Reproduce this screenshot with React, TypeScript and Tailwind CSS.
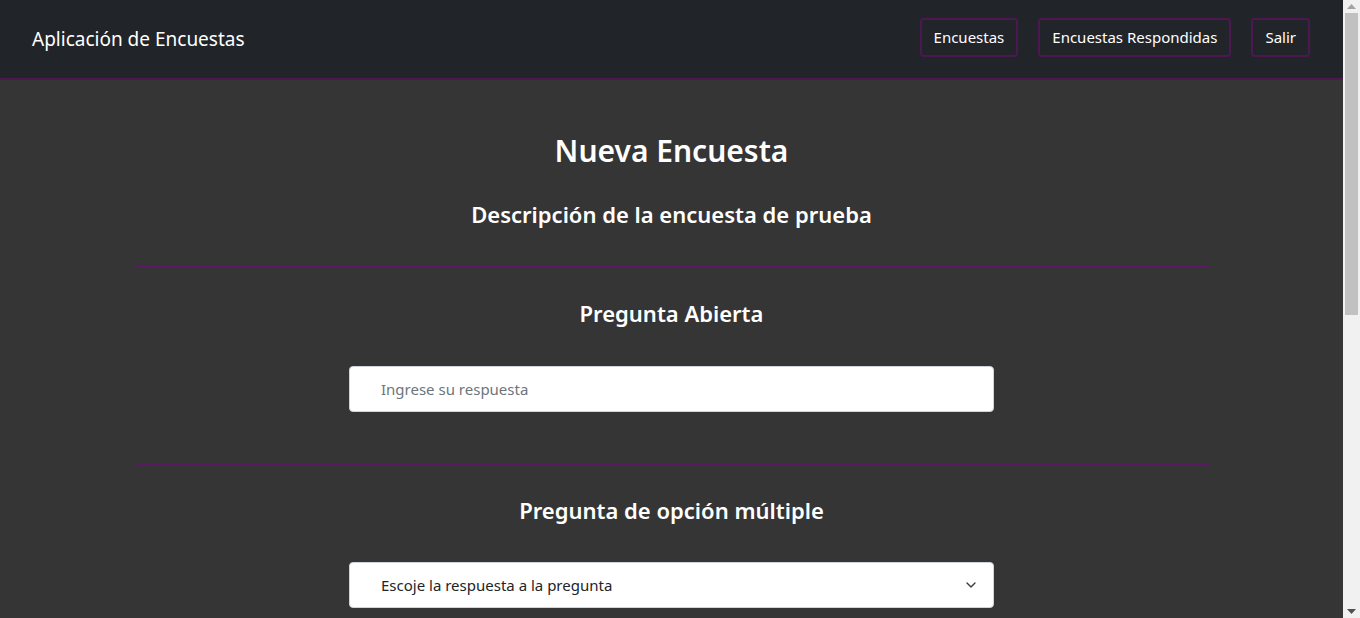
import { ChevronDown } from "lucide-react";

const font = { fontFamily: '"Noto Sans", "Open Sans", sans-serif' };

function NavButton({ label }: { label: string }) {
  return (
    <button className="h-[39px] px-[12px] rounded-[4px] border-2 border-[#4d1752] text-white text-[15px] leading-none">
      {label}
    </button>
  );
}

function Scrollbar() {
  return (
    <aside className="w-[17px] h-screen shrink-0 bg-[#f1f1f1] flex flex-col items-center">
      <svg className="mt-[4px] w-[9px] h-[5px]" viewBox="0 0 9 5">
        <path d="M4.5 0 L9 5 H0 Z" fill="#a3a3a3" />
      </svg>
      <div className="mt-[4px] w-[13px] h-[302px] bg-[#c1c1c1]" />
      <div className="flex-1" />
      <svg className="mb-[4px] w-[9px] h-[5px]" viewBox="0 0 9 5">
        <path d="M0 0 H9 L4.5 5 Z" fill="#505050" />
      </svg>
    </aside>
  );
}

export default function App() {
  return (
    <div className="flex h-screen overflow-hidden" style={font}>
      <div className="flex-1 min-w-0 h-screen overflow-hidden bg-[#353535] text-white">
        <nav className="h-[80px] bg-[#212529] border-b-2 border-[#4d1752] flex items-center justify-between pl-[32px] pr-[33px]">
          <span className="text-[19px] text-white">Aplicación de Encuestas</span>
          <div className="flex items-center gap-[20px] mb-[3px]">
            <NavButton label="Encuestas" />
            <NavButton label="Encuestas Respondidas" />
            <NavButton label="Salir" />
          </div>
        </nav>

        <main className="mx-auto w-[1074px] pt-[52px] pb-24">
          <h1 className="text-center text-[30px] font-semibold leading-[38px]">Nueva Encuesta</h1>
          <h2 className="mt-[30px] text-center text-[22px] font-semibold leading-[29px]">
            Descripción de la encuesta de prueba
          </h2>

          <hr className="mt-[37px] border-0 h-[2px] bg-[#5c1a66]" />

          {/* Pregunta abierta */}
          <h3 className="mt-[31px] text-center text-[22px] font-semibold leading-[29px]">Pregunta Abierta</h3>
          <div className="mt-[38px] flex justify-center">
            <input
              type="text"
              placeholder="Ingrese su respuesta"
              className="w-[645px] h-[46px] rounded-[4px] bg-white border border-[#ced4da] pl-[31px] text-[15px] text-[#212529] placeholder:text-[#6c757d] outline-none"
            />
          </div>

          <hr className="mt-[51px] border-0 h-[2px] bg-[#5c1a66]" />

          {/* Pregunta de opción múltiple */}
          <h3 className="mt-[31px] text-center text-[22px] font-semibold leading-[29px]">
            Pregunta de opción múltiple
          </h3>
          <div className="mt-[37px] flex justify-center">
            <div className="relative w-[645px] h-[46px] rounded-[4px] bg-white border border-[#ced4da] flex items-center pl-[31px] text-[15px] text-[#212529]">
              Escoje la respuesta a la pregunta
              <ChevronDown className="absolute right-[14px] w-4 h-4 text-[#343a40]" strokeWidth={2} />
            </div>
          </div>
        </main>
      </div>
      <Scrollbar />
    </div>
  );
}
